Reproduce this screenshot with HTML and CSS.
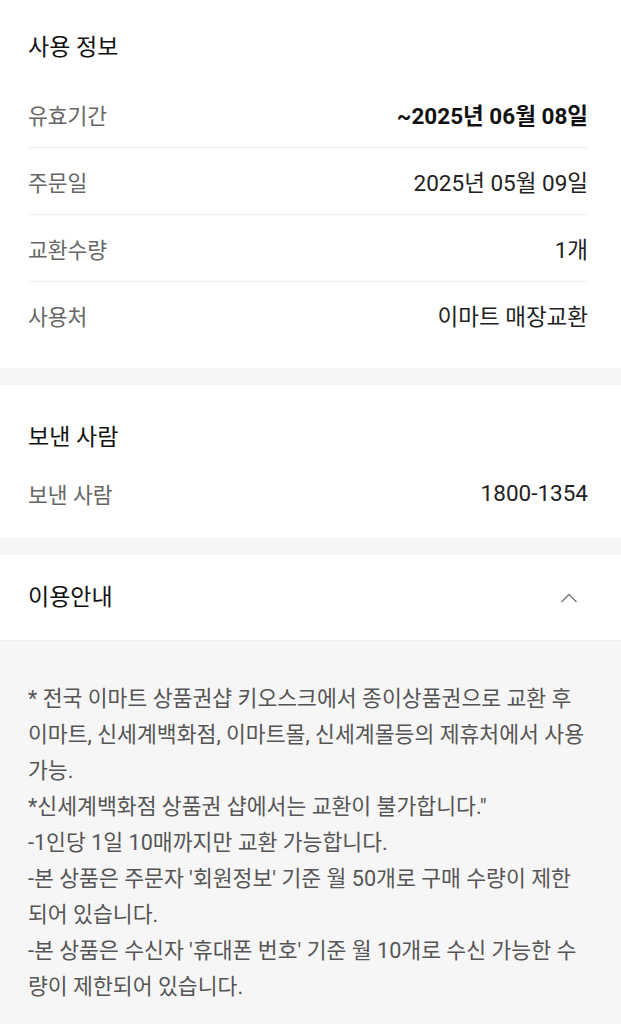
FILE: index.html
```html
<!DOCTYPE html>
<html lang="ko">

<head>
    <meta charset="UTF-8">
    <meta name="viewport" content="width=device-width, initial-scale=1.0">
    <title>사용 정보</title>
    <link rel="stylesheet" href="styles.css">
</head>

<body>
    <div class="page">
        <section class="card card-usage">
            <h2 class="card-title">사용 정보</h2>
            <div class="info-list">
                <div class="info-row">
                    <span class="info-label">유효기간</span>
                    <span class="info-value strong">~2025년 06월 08일</span>
                </div>
                <div class="info-row">
                    <span class="info-label">주문일</span>
                    <span class="info-value">2025년 05월 09일</span>
                </div>
                <div class="info-row">
                    <span class="info-label">교환수량</span>
                    <span class="info-value">1개</span>
                </div>
                <div class="info-row">
                    <span class="info-label">사용처</span>
                    <span class="info-value">이마트 매장교환</span>
                </div>
            </div>
        </section>

        <section class="card card-sender">
            <h2 class="card-title">보낸 사람</h2>
            <div class="info-list">
                <div class="info-row">
                    <span class="info-label">보낸 사람</span>
                    <span class="info-value">1800-1354</span>
                </div>
            </div>
        </section>

        <section class="card card-guide">
            <div class="guide-header">
                <h2 class="card-title">이용안내</h2>
                <svg class="chevron" width="18" height="10" viewBox="0 0 18 10">
                    <path d="M1.5 9 L9 1.5 L16.5 9" fill="none" stroke="#777" stroke-width="1.4" />
                </svg>
            </div>
            <div class="guide-body">
                <p>* 전국 이마트 상품권샵 키오스크에서 종이상품권으로 교환 후 이마트, 신세계백화점, 이마트몰, 신세계몰등의 제휴처에서 사용 가능.</p>
                <p>*신세계백화점 상품권 샵에서는 교환이 불가합니다."</p>
                <p>-1인당 1일 10매까지만 교환 가능합니다.</p>
                <p>-본 상품은 주문자 '회원정보' 기준 월 50개로 구매 수량이 제한되어 있습니다.</p>
                <p>-본 상품은 수신자 '휴대폰 번호' 기준 월 10개로 수신 가능한 수량이 제한되어 있습니다.</p>
            </div>
        </section>
    </div>
</body>

</html>
```

FILE: styles.css
```css
body {
    margin: 0px;
    background-color: #f6f6f6;
    font-family: Roboto, "Noto Sans CJK KR", sans-serif;
}

.page {
    display: flex;
    flex-direction: column;
    gap: 17px;
}

.card {
    background-color: #ffffff;
}

.card-title {
    margin: 0px;
    font-size: 23px;
    font-weight: 400;
    line-height: 30px;
    color: #111111;
}

.card-usage {
    padding: 33px 33px 20px 28px;
}

.card-usage .card-title {
    margin-bottom: 18px;
}

.card-sender {
    padding: 38px 33px 12px 28px;
}

.card-sender .card-title {
    margin-bottom: 7px;
}

.info-row {
    display: flex;
    justify-content: space-between;
    align-items: center;
    height: 66px;
    border-bottom: 1px solid #eeeeee;
}

.info-row:last-child {
    border-bottom: none;
}

.info-label {
    font-size: 21.5px;
    color: #666666;
}

.info-value {
    font-size: 22.5px;
    color: #222222;
}

.info-value.strong {
    font-weight: 700;
    color: #111111;
}

.card-guide {
    background-color: #f6f6f6;
}

.guide-header {
    display: flex;
    justify-content: space-between;
    align-items: center;
    height: 85px;
    padding: 0px 43px 0px 28px;
    background-color: #ffffff;
    border-bottom: 1px solid #eeeeee;
}

.chevron {
    display: block;
}

.guide-body {
    padding: 40px 33px 28px 28px;
    color: #555555;
    font-size: 21.6px;
    line-height: 36px;
}

.guide-body p {
    margin: 0px;
}
```
